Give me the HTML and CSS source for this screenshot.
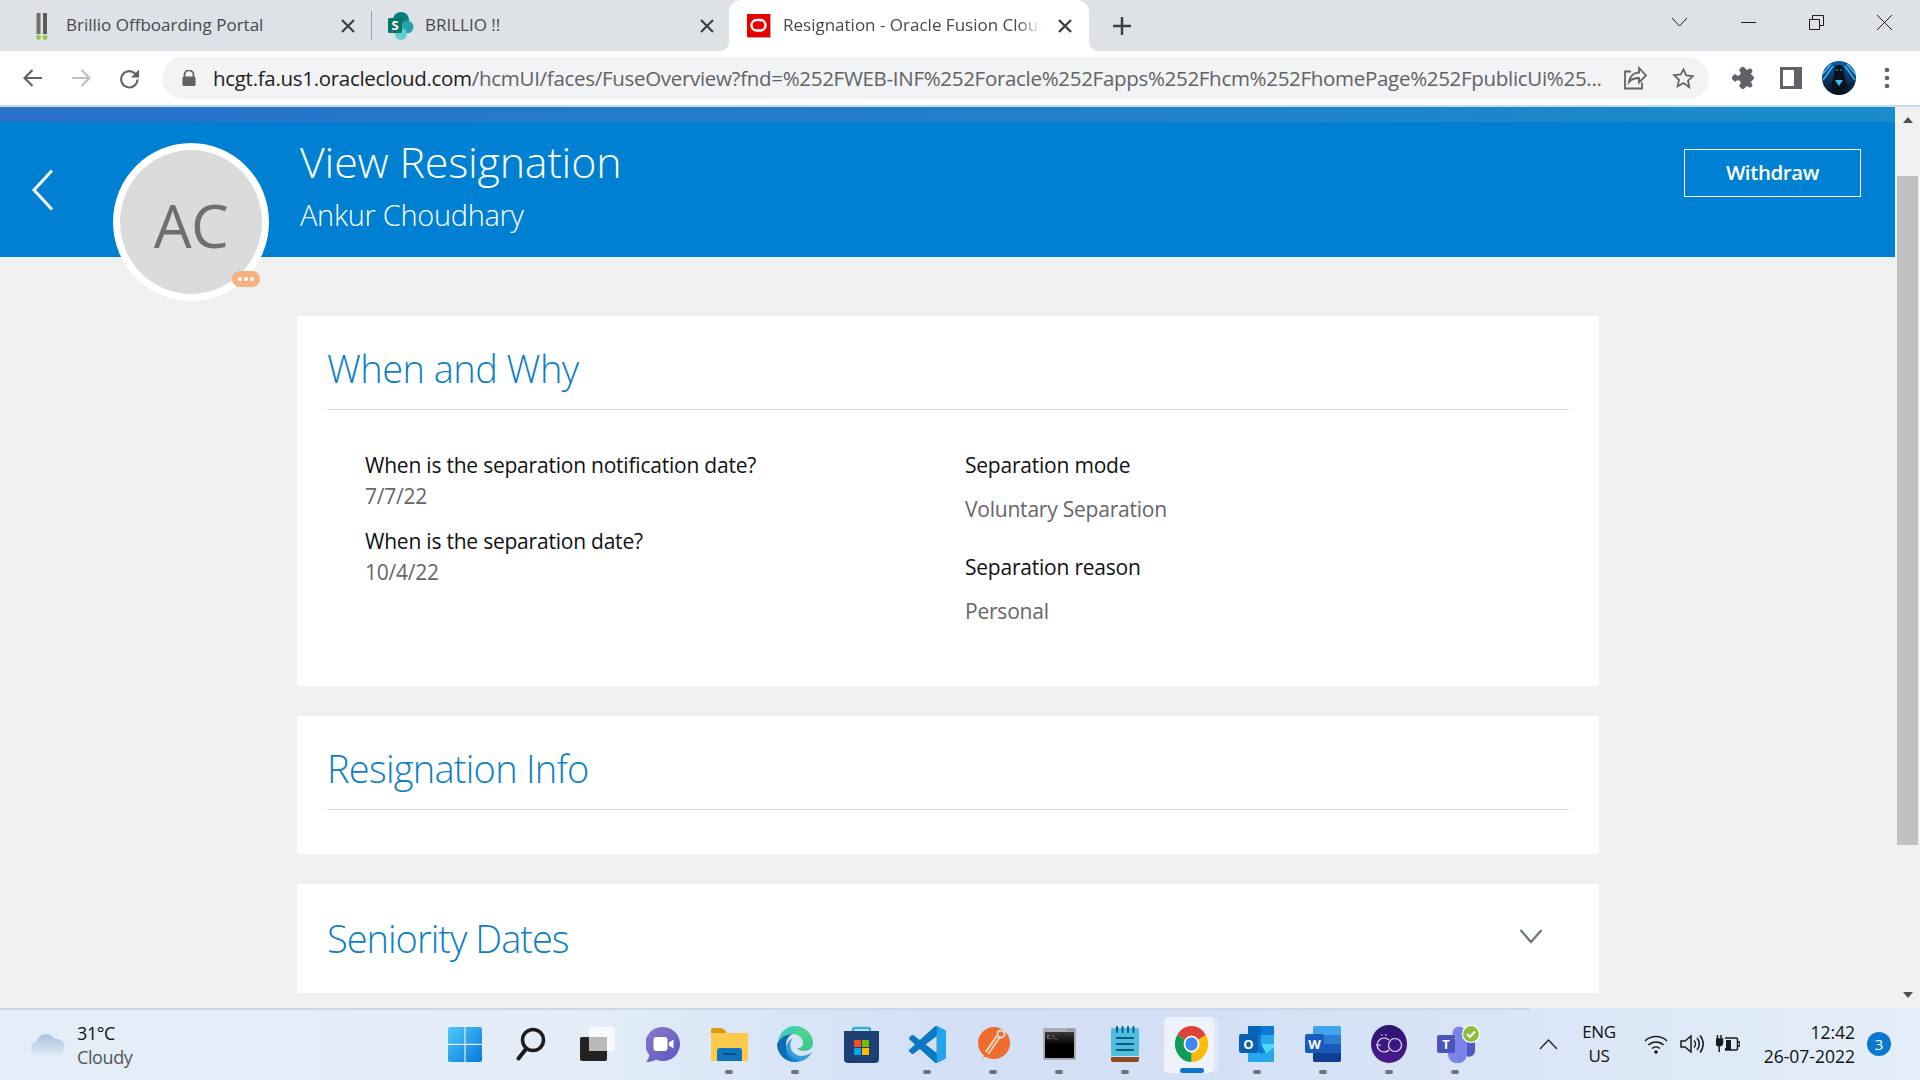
FILE: index.html
```html
<!DOCTYPE html>
<html lang="en">
<head>
<meta charset="utf-8">
<title>Resignation - Oracle Fusion Cloud</title>
<link rel="stylesheet" href="styles.css">
</head>
<body>
<div class="tabstrip">
  <div class="tab tab-one">
    <svg class="fav" viewBox="0 0 24 30" width="24" height="30"><rect x="6.500" y="2" width="4" height="21" fill="#6f6f6f"/><rect x="13" y="2" width="4" height="21" fill="#5a5a5a"/><circle cx="8.500" cy="26.500" r="2.400" fill="#9cc83c"/><circle cx="15" cy="26.500" r="2.400" fill="#9cc83c"/></svg>
    <span class="tab-title">Brillio Offboarding Portal</span>
    <svg class="tab-close" viewBox="0 0 16 16" width="16" height="16"><path d="M2 2l12 12M14 2L2 14"/></svg>
  </div>
  <span class="tab-sep"></span>
  <div class="tab tab-two">
    <svg class="fav" viewBox="0 0 26 30" width="26" height="30"><circle cx="13" cy="9" r="8" fill="#0b7b7f"/><circle cx="19" cy="16" r="6.500" fill="#27a3a8"/><circle cx="13" cy="23" r="6" fill="#5fd0d0"/><rect x="0" y="7" width="14" height="15" rx="1.500" fill="#077568"/><text x="7" y="19" class="fav-letter">S</text></svg>
    <span class="tab-title">BRILLIO !!</span>
    <svg class="tab-close" viewBox="0 0 16 16" width="16" height="16"><path d="M2 2l12 12M14 2L2 14"/></svg>
  </div>
  <div class="tab tab-active">
    <svg class="fav" viewBox="0 0 24 24" width="24" height="24"><rect x="1" y="0" width="23" height="24" fill="#c9a0a0"/><rect x="0" y="0" width="23" height="23" fill="#e60000"/><rect x="4.500" y="6" width="14" height="10.500" rx="5.200" fill="none" stroke="#fff" stroke-width="2.400"/></svg>
    <span class="tab-title tab-title-fade">Resignation - Oracle Fusion Cloud</span>
    <svg class="tab-close" viewBox="0 0 16 16" width="16" height="16"><path d="M2 2l12 12M14 2L2 14"/></svg>
  </div>
  <svg class="new-tab" viewBox="0 0 18 18" width="18" height="18"><path d="M9 0v18M0 9h18"/></svg>
  <div class="caption">
    <svg viewBox="0 0 17 17" width="17" height="17"><path d="M1 5l7.500 8L16 5"/></svg>
    <svg viewBox="0 0 17 17" width="17" height="17"><path d="M1 8.500h15"/></svg>
    <svg viewBox="0 0 17 17" width="17" height="17"><path d="M1.500 5.500h10v10h-10zM4.500 5.500v-4h11v10h-4"/></svg>
    <svg viewBox="0 0 17 17" width="17" height="17"><path d="M1 1l15 15M16 1L1 16"/></svg>
  </div>
</div>

<div class="toolbar">
  <svg class="nav-ico" viewBox="0 0 20 20" width="20" height="20"><path d="M19 10H2M9.500 2L1.500 10l8 8"/></svg>
  <svg class="nav-ico nav-off" viewBox="0 0 20 20" width="20" height="20"><path d="M1 10h17M10.500 2l8 8-8 8"/></svg>
  <svg class="nav-ico" viewBox="0 0 22 22" width="21" height="21"><path d="M19.300 12a8.500 8.500 0 1 1-2.600-6.300L19 8"/><path class="nav-fill" d="M21 1.500V10h-8.500z"/></svg>
  <div class="omnibox">
    <svg class="lock" viewBox="0 0 14 16" width="14" height="16"><path d="M2.500 7V4.800a4.500 4.500 0 0 1 9 0V7" fill="none" stroke="#5f6368" stroke-width="1.800"/><rect x="0.500" y="6.500" width="13" height="9.500" rx="1.500" fill="#5f6368"/></svg>
    <span class="url"><span class="url-host">hcgt.fa.us1.oraclecloud.com</span>/hcmUI/faces/FuseOverview?fnd=%252FWEB-INF%252Foracle%252Fapps%252Fhcm%252FhomePage%252FpublicUi%25...</span>
    <svg class="omni-ico" viewBox="0 0 23 24" width="23" height="24"><path d="M7 5.500H1v17h17v-6M5 16c1-6 5-9.500 10-9.500V2l7 7.500-7 7V12c-4 0-7.500 1-10 4z"/></svg>
    <svg class="omni-ico" viewBox="0 0 24 24" width="23" height="23"><path d="M12 2.500l2.900 6.300 6.900.8-5.100 4.700 1.400 6.800L12 16.700l-6.100 3.400 1.400-6.800-5.100-4.700 6.900-.8z"/></svg>
  </div>
  <svg class="tool-ico" viewBox="0 0 24 24" width="26" height="26"><path d="M20.500 11H19V7c0-1.100-.9-2-2-2h-4V3.500C13 2.120 11.880 1 10.500 1S8 2.120 8 3.500V5H4c-1.100 0-1.990.9-1.990 2v3.800H3.500c1.490 0 2.700 1.210 2.700 2.700s-1.210 2.700-2.700 2.700H2V20c0 1.100.9 2 2 2h3.800v-1.500c0-1.490 1.210-2.700 2.700-2.700 1.490 0 2.700 1.210 2.700 2.700V22H17c1.100 0 2-.9 2-2v-4h1.500c1.380 0 2.500-1.120 2.500-2.500S21.880 11 20.500 11z" transform="rotate(45 12 12) scale(.92) translate(1 1)"/></svg>
  <svg class="tool-ico" viewBox="0 0 22 22" width="22" height="22"><path fill-rule="evenodd" d="M0 0h22v22H0zM3 3v16h11V3z"/></svg>
  <svg class="avatar-ico" viewBox="0 0 34 34" width="34" height="34"><defs><linearGradient id="pg" x1="0" y1="0" x2="0" y2="1"><stop offset="0" stop-color="#0c5ea8"/><stop offset=".65" stop-color="#0a2a50"/><stop offset="1" stop-color="#05101c"/></linearGradient></defs><circle cx="17" cy="17" r="17" fill="url(#pg)"/><path d="M11 5L1 19M23 5l10 14M9 3L0 14M25 3l9 11" stroke="#3fb0f0" stroke-width="1.600" fill="none"/><path d="M17 4c3.500 0 5 3 4.500 6.500L25 26l-8 7-8-7 3.500-15.500C12 7 13.500 4 17 4z" fill="#0b1118"/><circle cx="15" cy="9" r=".8" fill="#3fc0f5"/><circle cx="19" cy="9" r=".8" fill="#3fc0f5"/><path d="M13 19h8l-4 6z" fill="#35c4f5"/></svg>
  <svg class="menu-ico" viewBox="0 0 6 22" width="6" height="22"><circle cx="3" cy="3" r="2.300"/><circle cx="3" cy="11" r="2.300"/><circle cx="3" cy="19" r="2.300"/></svg>
</div>
<div class="load-line"></div>

<div class="viewport">
  <main class="page">
    <div class="stripe"></div>
    <header class="hero">
      <svg class="hero-back" viewBox="0 0 22 42" width="22" height="42"><path d="M20 1.500L2 21l18 19.500"/></svg>
      <div class="avatar">
        <span class="avatar-text">AC</span>
        <span class="presence"><i></i><i></i><i></i></span>
      </div>
      <div class="hero-text">
        <h1 class="hero-title">View Resignation</h1>
        <div class="hero-sub">Ankur Choudhary</div>
      </div>
      <button class="withdraw">Withdraw</button>
    </header>

    <div class="cards">
      <section class="card card-why">
        <h2 class="card-title card-title-why">When and Why</h2>
        <div class="fields">
          <div class="col col-left">
            <div class="lbl">When is the separation notification date?</div>
            <div class="val">7/7/22</div>
            <div class="lbl lbl-next">When is the separation date?</div>
            <div class="val">10/4/22</div>
          </div>
          <div class="col col-right">
            <div class="lbl">Separation mode</div>
            <div class="val val-far">Voluntary Separation</div>
            <div class="lbl lbl-far">Separation reason</div>
            <div class="val val-far">Personal</div>
          </div>
        </div>
      </section>
      <section class="card card-info">
        <h2 class="card-title">Resignation Info</h2>
      </section>
      <section class="card card-dates">
        <h2 class="card-title card-title-plain">Seniority Dates</h2>
        <svg class="expand" viewBox="0 0 24 16" width="24" height="16"><path d="M1.500 2L12 14 22.500 2"/></svg>
      </section>
    </div>
  </main>
  <div class="scrollbar">
    <span class="arrow arrow-up"></span>
    <div class="track"><div class="thumb"></div></div>
    <span class="arrow arrow-down"></span>
  </div>
</div>

<footer class="taskbar">
  <div class="weather">
    <svg viewBox="0 0 36 24" width="36" height="24"><defs><linearGradient id="cl" x1="0" y1="0" x2="0" y2="1"><stop offset="0" stop-color="#aac2de"/><stop offset="1" stop-color="#dbe7f5"/></linearGradient></defs><path d="M8 23a7 7 0 0 1-1.500-13.800A10 10 0 0 1 24.500 7 8 8 0 0 1 28 23z" fill="url(#cl)"/></svg>
    <div class="weather-text"><div class="temp">31°C</div><div class="cond">Cloudy</div></div>
  </div>
  <div class="apps">
    <div class="app"><svg viewBox="0 0 34 35" width="34" height="35"><defs><linearGradient id="w1" x1="0" y1="0" x2="1" y2="1"><stop offset="0" stop-color="#4fc8fa"/><stop offset="1" stop-color="#0a78d8"/></linearGradient></defs><path fill="url(#w1)" d="M2 0h14.400v16.800H0V2a2 2 0 0 1 2-2zM17.600 0H32a2 2 0 0 1 2 2v14.800H17.600zM0 18h16.400v17H2a2 2 0 0 1-2-2zM17.600 18H34v15a2 2 0 0 1-2 2H17.600z"/></svg></div>
    <div class="app"><svg viewBox="0 0 30 34" width="30" height="34"><circle cx="17" cy="13" r="10.500" fill="none" stroke="#1c1c1c" stroke-width="3.500"/><path d="M10 22L2.500 31.500" stroke="#1c1c1c" stroke-width="4" stroke-linecap="round"/></svg></div>
    <div class="app"><svg viewBox="0 0 35 34" width="35" height="34"><rect x="0" y="10" width="27" height="24" rx="2" fill="#222"/><rect x="9" y="0" width="26" height="24" rx="2" fill="#fafafa" opacity=".92"/><rect x="9" y="10" width="18" height="14" fill="#b9b9b9"/></svg></div>
    <div class="app"><svg viewBox="0 0 34 35" width="34" height="35"><defs><linearGradient id="ch" x1="0" y1="0" x2="1" y2="1"><stop offset="0" stop-color="#8a7cc9"/><stop offset="1" stop-color="#5a55c0"/></linearGradient></defs><path fill="url(#ch)" d="M17 0a17 17 0 1 1-7 32.500C7 34.500 3 35 0 35c2-2 3-4.500 3.300-7A17 17 0 0 1 17 0z"/><rect x="7.500" y="10" width="14" height="14" rx="3" fill="#fff"/><path fill="#fff" d="M23 15.500l4.500-3v9l-4.500-3z"/></svg></div>
    <div class="app"><svg viewBox="0 0 37 33" width="37" height="33"><path fill="#d99a16" d="M0 2a2 2 0 0 1 2-2h9l4 3 1 4H0z"/><path fill="#fcc94a" d="M0 5h37v28H0z"/><path fill="#0f74bd" d="M6 33V23a3 3 0 0 1 3-3h19a3 3 0 0 1 3 3v10z"/><rect x="12" y="25" width="13" height="2" fill="#0a4e86"/></svg></div>
    <div class="app"><svg viewBox="0 0 36 36" width="36" height="36"><defs><linearGradient id="ed" x1="0" y1="0" x2="1" y2="1"><stop offset="0" stop-color="#37c6d0"/><stop offset=".5" stop-color="#4fd58a"/><stop offset="1" stop-color="#32c690"/></linearGradient></defs><path fill="url(#ed)" d="M18 0c10 0 18 8 18 17 0 5-4 8-9 8-3 0-6-1-7-3 4 0 6-2 6-5 0-5-5-9-10-9C9 8 4 11 1 16 2 7 9 0 18 0z"/><path fill="#0a6cb8" d="M1 16C4 11 9 8 16 8c-5 2-7 6-7 11 0 8 7 14 14 15-2 1.500-3.500 2-5 2C8 36 0 28 0 18z"/><path fill="#1b8fd4" d="M18 36c-6-2-10-8-9-15 1-4 3-7 7-9-3 3-3 7-2 11 1.500 4 6 7 10 7 3 0 7-1 11-4-3 6-9 10-17 10z" opacity=".85"/></svg></div>
    <div class="app"><svg viewBox="0 0 35 37" width="35" height="37"><path d="M9 8V4a2 2 0 0 1 2-2h13a2 2 0 0 1 2 2v4" fill="none" stroke="#2fb0e8" stroke-width="2.500"/><path fill="#1c3f74" d="M0 5h35v28a4 4 0 0 1-4 4H4a4 4 0 0 1-4-4z"/><rect x="10" y="14" width="7" height="7" fill="#f25022"/><rect x="18" y="14" width="7" height="7" fill="#7fba00"/><rect x="10" y="22" width="7" height="7" fill="#00a4ef"/><rect x="18" y="22" width="7" height="7" fill="#ffb900"/></svg></div>
    <div class="app"><svg viewBox="0 0 24 24" width="37" height="37" preserveAspectRatio="none"><path fill="#0a78c4" d="M23.150 2.587L18.210.21a1.494 1.494 0 0 0-1.705.29l-9.460 8.630-4.120-3.128a.999.999 0 0 0-1.276.057L.327 7.261A1 1 0 0 0 .326 8.740L3.899 12 .326 15.260a1 1 0 0 0 .001 1.479L1.650 17.940a.999.999 0 0 0 1.276.057l4.120-3.128 9.460 8.630a1.492 1.492 0 0 0 1.704.29l4.942-2.377A1.500 1.500 0 0 0 24 20.060V3.939a1.500 1.500 0 0 0-.85-1.352zm-5.146 14.861L10.826 12l7.178-5.448v10.896z"/><path fill="#23a5ee" d="M18.004 0.300l.206-.09 4.940 2.377A1.500 1.500 0 0 1 24 3.939V20.060a1.500 1.500 0 0 1-.85 1.353l-4.940 2.377-.206-.09V0.300z"/></svg></div>
    <div class="app"><svg viewBox="0 0 33 37" width="33" height="37"><circle cx="17" cy="17" r="16" fill="#ef6c2e"/><path d="M5 33l5-7 2.500 2z" fill="#ef6c2e"/><path d="M10 27L21 11" stroke="#f6d9c2" stroke-width="5" fill="none"/><path d="M10 27L21 11" stroke="#d97f3c" stroke-width="1.500" fill="none"/><circle cx="24" cy="8" r="3.600" fill="#ef6c2e" stroke="#dedede" stroke-width="2"/></svg></div>
    <div class="app"><svg viewBox="0 0 33 32" width="33" height="32"><defs><linearGradient id="cm" x1="0" y1="0" x2="0" y2="1"><stop offset="0" stop-color="#3a3a3a"/><stop offset=".5" stop-color="#000"/></linearGradient></defs><rect width="33" height="32" rx="1.500" fill="#a9adb2"/><rect x="2" y="4" width="29" height="26" fill="url(#cm)"/><path d="M24 2h1.500M27 2h1.500M30 2h1" stroke="#555" stroke-width="1"/><text x="4" y="11" class="cmd-text">C:\_</text></svg></div>
    <div class="app"><svg viewBox="0 0 28 36" width="28" height="36"><path fill="#8a4a22" d="M0 31h28v3a2 2 0 0 1-2 2H2a2 2 0 0 1-2-2z"/><rect y="2" width="28" height="28" rx="2" fill="#4fbfe0"/><path d="M6 1v5M11.500 1v5M17 1v5M22.500 1v5" stroke="#0d5a80" stroke-width="2" stroke-linecap="round"/><path d="M5 12h18M5 18h18M5 24h18" stroke="#0d5a80" stroke-width="2"/></svg></div>
    <div class="app app-active"><span class="active-bg"></span><svg viewBox="0 0 48 48" width="33" height="36" preserveAspectRatio="none"><path fill="#db4437" d="M24 24L3.200 12A24 24 0 0 1 44.800 12z"/><path fill="#fbbc05" d="M24 24l20.800-12A24 24 0 0 1 24 48z"/><path fill="#0f9d58" d="M24 24v24A24 24 0 0 1 3.200 12z"/><circle cx="24" cy="24" r="11.500" fill="#fff"/><circle cx="24" cy="24" r="9" fill="#4285f4"/></svg><span class="active-bar"></span></div>
    <div class="app"><svg viewBox="0 0 36 36" width="36" height="36"><rect x="9" width="13" height="9" fill="#0364b8"/><rect x="22" width="13" height="9" fill="#0f78d4"/><rect x="9" y="9" width="13" height="9" fill="#0f78d4"/><rect x="22" y="9" width="13" height="9" fill="#28a8ea"/><rect x="9" y="18" width="26" height="18" rx="1" fill="#28a8ea"/><path d="M9 18h13l13 0v4L22 28z" fill="#0f78d4"/><path d="M22 18h13v4l-8 5z" fill="#50d9ff"/><rect y="8" width="19" height="19" rx="2" fill="#0a5fb0"/><text x="9.500" y="22.500" class="app-letter">O</text></svg></div>
    <div class="app"><svg viewBox="0 0 36 36" width="36" height="36"><rect x="8" width="28" height="36" rx="2" fill="#41a5ee"/><rect x="8" y="9" width="28" height="9" fill="#2b7cd3"/><rect x="8" y="18" width="28" height="9" fill="#185abd"/><path fill="#103f91" d="M8 27h28v7a2 2 0 0 1-2 2H10a2 2 0 0 1-2-2z"/><rect y="8" width="19" height="19" rx="2" fill="#185abd"/><text x="9.500" y="23" class="app-letter">W</text></svg></div>
    <div class="app"><svg viewBox="0 0 36 38" width="36" height="38"><defs><linearGradient id="go" x1="0" y1="0" x2="0" y2="1"><stop offset="0" stop-color="#2c1470"/><stop offset="1" stop-color="#4a1a90"/></linearGradient></defs><ellipse cx="18" cy="19" rx="18" ry="19" fill="url(#go)"/><path d="M18 15a7 7 0 1 0 0 10M5 20h5" fill="none" stroke="#e8e2f4" stroke-width="1.200"/><circle cx="24" cy="20" r="6.500" fill="none" stroke="#e8e2f4" stroke-width="1.200"/><path d="M10 10h1.500M14 10h1.500" stroke="#fff" stroke-width="1.200"/></svg></div>
    <div class="app app-teams"><svg viewBox="0 0 44 38" width="44" height="38"><circle cx="22" cy="8" r="6.500" fill="#7b83eb"/><circle cx="32" cy="10" r="4.500" fill="#5059c9"/><path fill="#5059c9" d="M27 15h11v11a6 6 0 0 1-11 3z"/><path fill="#7b83eb" d="M11 14h19v15a9 9 0 0 1-19 0z"/><rect y="10" width="18" height="18" rx="2" fill="#4b53bc"/><text x="9" y="24" class="app-letter">T</text><circle cx="34" cy="9" r="8.500" fill="#8dbd3a" stroke="#fff" stroke-width="1.200"/><path d="M30 9l3 3 5-5.500" fill="none" stroke="#fff" stroke-width="2"/></svg></div>
  </div>
  <div class="tray">
    <svg class="tray-chev" viewBox="0 0 19 11" width="19" height="11"><path d="M1 10L9.500 1 18 10"/></svg>
    <div class="lang"><div>ENG</div><div>US</div></div>
    <svg class="tray-ico" viewBox="0 0 24 20" width="24" height="20"><path d="M1 7a16 16 0 0 1 22 0M4.500 11a11 11 0 0 1 15 0M8 14.500a6 6 0 0 1 8 0"/><circle cx="12" cy="18" r="1.800" class="tray-fill"/></svg>
    <svg class="tray-ico" viewBox="0 0 24 22" width="24" height="22"><path d="M1 8v6h4l6 5V3L5 8zM14 7.500a5 5 0 0 1 0 7M17 5a9 9 0 0 1 0 12M20 2.500a13 13 0 0 1 0 17"/></svg>
    <svg class="tray-ico" viewBox="0 0 24 20" width="24" height="20"><path d="M9 4h11a1.500 1.500 0 0 1 1.500 1.500v9A1.500 1.500 0 0 1 20 16H9M21.500 8H24v4h-2.500"/><path d="M1.500 1v4M5 1v4M0 5h6.500v3.500a3.200 3.200 0 0 1-6.500 0zM3.200 11v7" class="tray-plug"/><path d="M15 6h-5v8h-1v2h6z" class="tray-fill"/></svg>
    <div class="clock"><div>12:42</div><div>26-07-2022</div></div>
    <span class="notif">3</span>
  </div>
</footer>
</body>
</html>
```

FILE: styles.css
```css
* { box-sizing: border-box; }
html, body { margin: 0; height: 100%; }
body {
  height: 1080px;
  display: flex;
  flex-direction: column;
  overflow: hidden;
  font-family: "Open Sans", "Noto Sans", "Liberation Sans", sans-serif;
  background: #f0f0f0;
}

/* tab strip */
.tabstrip {
  height: 51px;
  flex: none;
  display: flex;
  align-items: center;
  background: #dee1e6;
  padding-left: 20px;
}
.tab { display: flex; align-items: center; height: 51px; font-size: 17px; color: #45494e; }
.tab-one { width: 351px; padding: 0 15px 0 10px; }
.tab-two { width: 357px; padding: 0 14px 0 16px; }
.tab-active {
  width: 360px;
  padding: 0 16px 0 18px;
  background: #fff;
  border-radius: 12px 12px 0 0;
  position: relative;
}
.tab-active::before, .tab-active::after {
  content: "";
  position: absolute;
  bottom: 0;
  width: 10px;
  height: 10px;
  background: radial-gradient(circle at 0 0, transparent 10px, #fff 10.500px);
}
.tab-active::before { left: -10px; }
.tab-active::after { right: -10px; background: radial-gradient(circle at 100% 0, transparent 10px, #fff 10.500px); }
.fav { flex: none; }
.fav-letter { font: 700 13px "Open Sans", sans-serif; fill: #fff; text-anchor: middle; }
.tab-title { flex: 1; margin: -2px 0 0 12px; white-space: nowrap; overflow: hidden; }
.tab-two .tab-title { margin-left: 11px; }
.tab-active .tab-title { margin-left: 12px; }
.tab-title-fade { mask-image: linear-gradient(90deg, #000 90%, transparent 99%); margin-right: 13px; }
.tab-close { flex: none; }
.tab-close path { fill: none; stroke: #3c4043; stroke-width: 2.200; }
.tab-active .tab-close path { stroke-width: 2.400; }
.tab-sep { width: 1px; height: 29px; background: #9aa0a6; }
.new-tab { margin-left: 24px; flex: none; }
.new-tab path { stroke: #3c4043; stroke-width: 2.500; fill: none; }
.caption { margin-left: auto; display: flex; gap: 51px; padding: 0 27px 7px 0; }
.caption svg:first-child { margin-top: -1px; margin-right: 1px; margin-left: -1px; }
.caption path { fill: none; stroke: #1a1a1a; stroke-width: 1; }

/* toolbar */
.toolbar {
  height: 54px;
  flex: none;
  background: #fff;
  display: flex;
  align-items: center;
  padding-left: 23px;
}
.nav-ico { flex: none; margin-right: 28px; }
.nav-ico path { fill: none; stroke: #5f6368; stroke-width: 2.200; }
.nav-ico .nav-fill { fill: #5f6368; stroke: none; }
.nav-off path { stroke: #bdc1c6; }
.omnibox {
  width: 1547px;
  margin-left: -6px;
  height: 42px;
  flex: none;
  background: #f1f3f4;
  border-radius: 21px;
  display: flex;
  align-items: center;
  padding: 0 14px 0 20px;
}
.lock { flex: none; }
.url {
  margin: -1px 0 0 17px;
  flex: 1;
  white-space: nowrap;
  overflow: hidden;
  font-size: 20.500px;
  letter-spacing: -.3px;
  color: #5f6368;
}
.url-host { color: #202124; }
.omni-ico { flex: none; margin-left: 8px; }
.omni-ico + .omni-ico { margin-left: 25px; }
.omni-ico path { fill: none; stroke: #5f6368; stroke-width: 1.800; }
.tool-ico { flex: none; fill: #5f6368; margin-left: 23px; }
.tool-ico + .tool-ico { margin-left: 22px; }
.avatar-ico { flex: none; margin-left: 20px; }
.menu-ico { flex: none; margin-left: 28px; fill: #5f6368; }
.load-line { height: 2px; flex: none; background: #c3dcf0; }

/* page */
.viewport { flex: 1; min-height: 0; display: flex; }
.page { flex: 1; min-width: 0; overflow: hidden; }
.stripe { height: 15px; background: linear-gradient(90deg, #2a71ca, #1a8cca); }
.hero {
  height: 135px;
  background: #0080d3;
  display: flex;
  align-items: flex-start;
  padding-left: 32px;
  color: #fff;
}
.hero-back { flex: none; margin-top: 47px; }
.hero-back path { fill: none; stroke: #fff; stroke-width: 3; }
.avatar {
  flex: none;
  width: 156px;
  height: 158px;
  margin: 21px 0 0 59px;
  padding-top: 6px;
  border-radius: 50%;
  border: 7px solid #fff;
  background: #dbdbdb;
  display: flex;
  align-items: center;
  justify-content: center;
  position: relative;
  z-index: 1;
}
.avatar-text { font-size: 60px; color: #6f6f6f; letter-spacing: -.5px; font-weight: 400; }
.presence {
  position: absolute;
  right: 2px;
  bottom: 7px;
  width: 28px;
  height: 16px;
  border-radius: 8px;
  background: #f6b180;
  display: flex;
  align-items: center;
  justify-content: center;
  gap: 2px;
}
.presence i { width: 4px; height: 4px; border-radius: 50%; background: #fff; }
.hero-text { flex: none; margin: 12px 0 0 31px; }
.hero-title { margin: 0; font-size: 43px; font-weight: 300; line-height: 56px; letter-spacing: -.2px; }
.hero-sub { font-size: 29px; font-weight: 300; line-height: 40px; margin-top: 5px; letter-spacing: -.3px; }
.withdraw {
  margin: 27px 34px 0 auto;
  width: 177px;
  height: 48px;
  background: transparent;
  border: 1.500px solid #fff;
  color: #fff;
  font: 600 20.500px "Open Sans", sans-serif;
  letter-spacing: -.4px;
  padding: 0 0 2px;
}

.cards { display: flex; flex-direction: column; gap: 30px; width: 1302px; margin: 59px 0 0 297px; }
.card { background: #fff; padding: 0 30px; }
.card-why { height: 370px; }
.card-info { height: 138px; }
.card-dates { height: 109px; display: flex; align-items: center; justify-content: space-between; padding-right: 56px; }
.card-title {
  margin: 0;
  font-size: 38px;
  font-weight: 300;
  color: #0d7fc6;
  letter-spacing: -.75px;
  height: 94px;
  line-height: 104px;
  border-bottom: 1px solid #dcdfe1;
}
.card-title-why { letter-spacing: -.55px; }
.card-title-plain { border-bottom: 0; height: 109px; line-height: 109px; letter-spacing: -1px; }
.expand { flex: none; margin-top: -6px; }
.expand path { fill: none; stroke: #6b7680; stroke-width: 2.200; }
.fields { display: flex; padding: 41px 0 0 38px; }
.col { flex: none; width: 600px; }
.lbl { font-size: 21px; line-height: 28px; color: #111; letter-spacing: -.22px; height: 28px; white-space: nowrap; }
.val { font-size: 21px; line-height: 28px; color: #666; letter-spacing: -.22px; margin-top: 3px; height: 28px; }
.lbl-next { margin-top: 17px; }
.val-far { margin-top: 16px; }
.lbl-far { margin-top: 30px; }

/* scrollbar */
.scrollbar { width: 25px; flex: none; background: #f1f1f1; display: flex; flex-direction: column; align-items: center; }
.arrow { width: 0; height: 0; border-left: 5px solid transparent; border-right: 5px solid transparent; flex: none; }
.arrow-up { border-bottom: 6px solid #505050; margin-top: 10px; }
.arrow-down { border-top: 6px solid #505050; margin-bottom: 10px; }
.track { flex: 1; width: 100%; padding: 53px 2px 0; }
.thumb { height: 669px; background: #c1c1c1; }

/* taskbar */
.taskbar {
  height: 72px;
  flex: none;
  display: flex;
  align-items: center;
  background: linear-gradient(90deg, #e4eef8 0, #e2edf8 30%, #d4e0f6 48%, #d3dff5 62%, #e3eef8 100%);
  position: relative;
}
.taskbar::before {
  content: "";
  position: absolute;
  left: 0;
  top: 0;
  width: 1530px;
  height: 2px;
  background: #ccd6e6;
}
.weather { width: 432px; flex: none; padding-left: 30px; display: flex; align-items: center; gap: 11px; color: #111; }
.weather-text { font-size: 18px; line-height: 24px; letter-spacing: -.4px; margin-top: 2px; }
.cond { color: #555; }
.apps { display: flex; flex: none; }
.app { width: 66px; height: 72px; display: flex; align-items: center; justify-content: center; position: relative; }
.app > svg { position: relative; }
.app::after {
  content: "";
  position: absolute;
  bottom: 6px;
  left: 29px;
  width: 8px;
  height: 4px;
  border-radius: 2px;
  background: #6d7178;
}
.app:nth-child(-n+4)::after, .app:nth-child(7)::after, .app-active::after { display: none; }
.app-teams > svg { margin-left: 8px; }
.active-bg {
  position: absolute;
  left: 6px;
  top: 9px;
  width: 50px;
  height: 56px;
  border-radius: 5px;
  background: #eef2fb;
  box-shadow: 5px 0 0 -1px #dfe6f6;
}
.active-bar { position: absolute; bottom: 7px; left: 22px; width: 24px; height: 5px; border-radius: 3px; background: #0d74cf; }
.cmd-text { font: 4.500px "Liberation Mono", monospace; fill: #ddd; }
.app-letter { font: 700 13px "Open Sans", sans-serif; fill: #fff; text-anchor: middle; }
.tray { flex: 1; display: flex; align-items: center; font-size: 17px; color: #111; }
.tray-chev { flex: none; margin-left: 51px; }
.tray-chev path { fill: none; stroke: #222; stroke-width: 1.300; }
.lang { width: 40px; margin-left: 21px; text-align: center; line-height: 24px; letter-spacing: -.3px; }
.tray-ico { flex: none; margin-left: 12px; }
.tray-ico path { fill: none; stroke: #1a1a1a; stroke-width: 1.500; }
.tray-ico .tray-plug { fill: #1a1a1a; }
.tray-ico .tray-fill { fill: #1a1a1a; stroke: none; }
.lang + .tray-ico { margin-left: 25px; }
.clock { width: 115px; text-align: right; line-height: 24px; letter-spacing: 0; font-size: 17.500px; }
.notif {
  flex: none;
  margin-left: 12px;
  width: 24px;
  height: 24px;
  border-radius: 50%;
  background: #0b78d0;
  color: #fff;
  font-size: 15px;
  line-height: 24px;
  text-align: center;
}
```
